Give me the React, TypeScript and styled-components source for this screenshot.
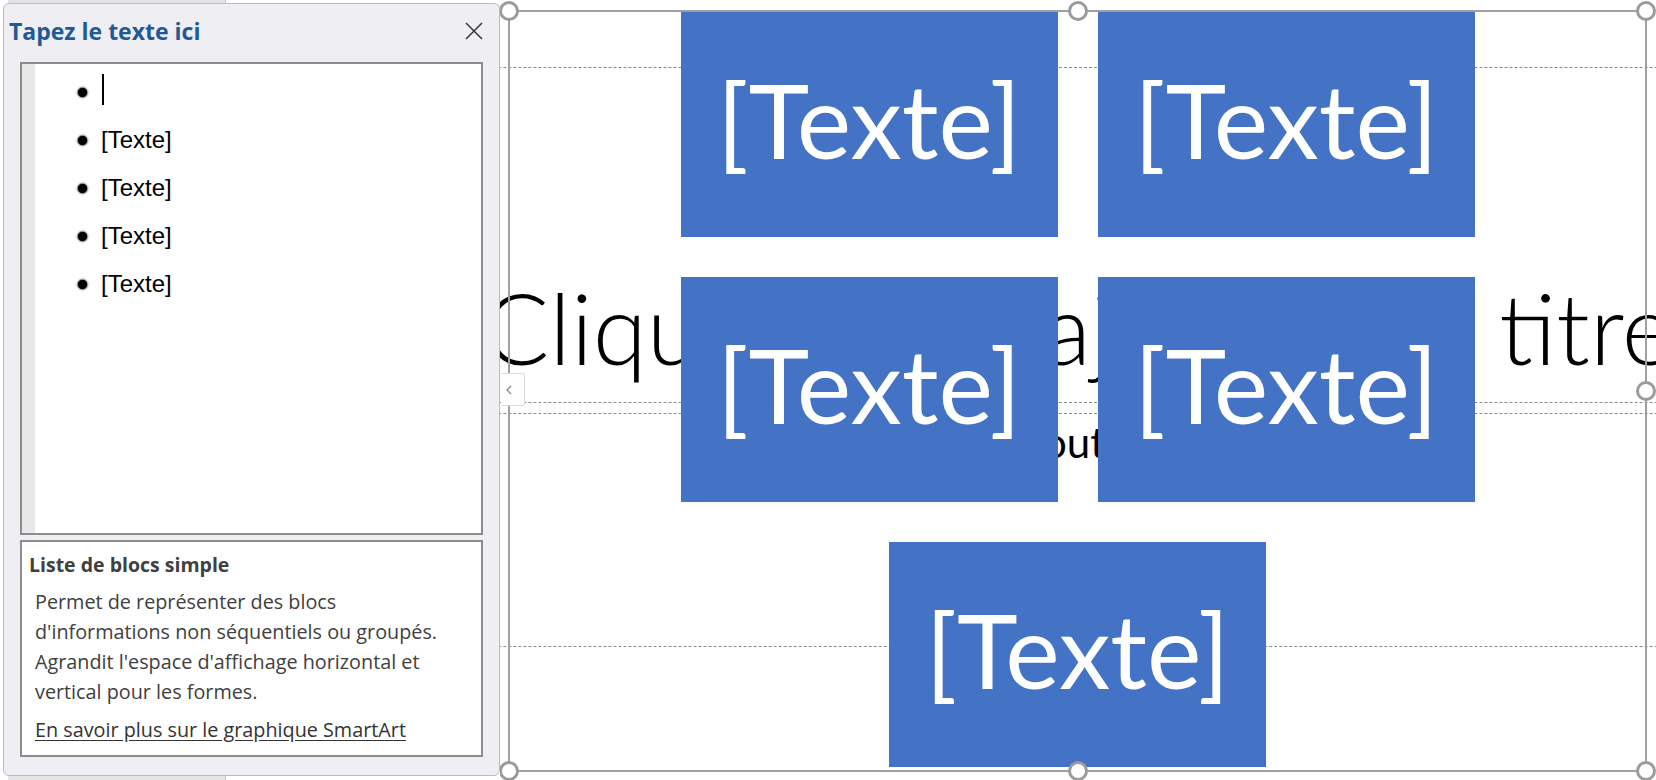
import React from 'react';
import styled, { createGlobalStyle } from 'styled-components';

const GlobalStyle = createGlobalStyle`
  html, body {
    margin: 0;
    padding: 0;
    background: #fff;
  }
  body {
    width: 1656px;
    height: 780px;
    overflow: hidden;
    font-family: 'Open Sans', 'Noto Sans', sans-serif;
  }
`;

const Screen = styled.div`
  position: relative;
  display: flex;
  width: 1656px;
  height: 780px;
`;

// grey ribbon tab peeking out behind the text pane
const BackTab = styled.div`
  position: absolute;
  left: 8px;
  top: 0;
  width: 217px;
  height: 780px;
  background: #e4e4e4;
  border-right: 1px solid #c8c8c8;
`;

const Pane = styled.div`
  position: relative;
  z-index: 2;
  box-sizing: border-box;
  display: flex;
  flex-direction: column;
  width: 497px;
  height: 773px;
  margin: 3px 0 0 3px;
  background: #eeeef3;
  border: 1px solid #b3bec6;
  border-radius: 6px;
`;

const PaneHeader = styled.div`
  box-sizing: border-box;
  display: flex;
  align-items: center;
  justify-content: space-between;
  height: 58px;
  padding: 0 16px 4px 5px;
`;

const PaneTitle = styled.span`
  font-family: 'Open Sans', sans-serif;
  font-weight: 700;
  font-size: 23px;
  color: #1f5a96;
`;

const PaneBody = styled.div`
  flex: 1;
  min-height: 0;
  display: flex;
  flex-direction: column;
  gap: 5px;
  padding: 0 16px 18px 16px;
`;

const ListBox = styled.div`
  flex: 1;
  display: flex;
  background: #fff;
  border: 2px solid #8c8c8c;
`;

const Gutter = styled.div`
  width: 13px;
  background: #e8e8e8;
`;

const BulletList = styled.ul`
  flex: 1;
  list-style: none;
  margin: 0;
  padding: 4px 0 0 43px;
`;

const BulletItem = styled.li`
  display: flex;
  align-items: center;
  height: 48px;
`;

const Bullet = styled.span`
  width: 9px;
  height: 9px;
  margin-right: 14px;
  border-radius: 50%;
  background: #000;
  box-shadow: 0 0 2px 0.5px #000;
`;

const ItemText = styled.span`
  font-family: 'Liberation Sans', Arial, sans-serif;
  font-size: 24px;
  color: #000;
`;

const Caret = styled.span`
  width: 2px;
  height: 31px;
  margin: -5px 0 0 1px;
  background: #000;
`;

const DescBox = styled.div`
  box-sizing: border-box;
  height: 217px;
  padding: 8px 10px 10px 7px;
  background: #fff;
  border: 2px solid #8c8c8c;
  color: #404040;
  white-space: nowrap;
`;

const DescTitle = styled.div`
  font-weight: 700;
  font-size: 19.5px;
  line-height: 30px;
`;

const DescText = styled.div`
  margin: 7px 0 0 6px;
  font-size: 19.8px;
  line-height: 30px;
`;

const DescLink = styled.a`
  display: block;
  margin: 8px 0 0 6px;
  font-size: 19.8px;
  line-height: 30px;
  color: #333;
  text-decoration: underline;
  text-underline-offset: 3px;
`;

const CollapseTab = styled.div`
  position: absolute;
  left: calc(100% + 2px);
  top: 369px;
  box-sizing: border-box;
  display: flex;
  align-items: center;
  width: 24px;
  height: 33px;
  padding-left: 5px;
  background: #fff;
  border: 1px solid #dadada;
  border-left: none;
  border-radius: 0 3px 3px 0;
`;

const Canvas = styled.div`
  position: relative;
  z-index: 1;
  flex: 1;
  height: 780px;
  overflow: hidden;
  background: #fff;
`;

const Placeholder = styled.div<{ $top: number; $height: number; $anchor: 'top' | 'bottom' }>`
  position: absolute;
  left: -307px;
  top: ${(p) => p.$top}px;
  box-sizing: border-box;
  width: 1770px;
  height: ${(p) => p.$height}px;
  display: flex;
  justify-content: center;
  align-items: ${(p) => (p.$anchor === 'top' ? 'flex-start' : 'flex-end')};
  padding: ${(p) => (p.$anchor === 'top' ? '3px 0 0' : '0 0 15px')};
  border: 1px dashed #8a8a8a;
`;

const TitleText = styled.span`
  font-family: Lato, sans-serif;
  font-weight: 300;
  font-size: 98px;
  line-height: 1.2;
  white-space: nowrap;
  color: #000;
`;

const SubtitleText = styled.span`
  font-family: Lato, sans-serif;
  font-size: 42px;
  line-height: 1.2;
  white-space: nowrap;
  color: #000;
`;

const SmartArtFrame = styled.div`
  position: absolute;
  left: 8px;
  top: 10px;
  box-sizing: border-box;
  width: 1139px;
  height: 762px;
  display: flex;
  flex-wrap: wrap;
  justify-content: center;
  align-content: flex-start;
  gap: 40px;
  border: 2px solid #a0a0a0;
`;

const Block = styled.div`
  box-sizing: border-box;
  display: flex;
  align-items: center;
  justify-content: center;
  width: 377px;
  height: 225px;
  padding-bottom: 10px;
  background: #4472c4;
  color: #fff;
  font-family: Lato, sans-serif;
  font-size: 103px;
  line-height: 1.2;
`;

const Handle = styled.span<{ $x: number; $y: number }>`
  position: absolute;
  left: calc(${(p) => p.$x}% + ${(p) => (p.$x === 0 ? -1 : p.$x === 100 ? 1 : 0)}px - 10px);
  top: calc(${(p) => p.$y}% + ${(p) => (p.$y === 0 ? -1 : p.$y === 100 ? 1 : 0)}px - 10px);
  box-sizing: border-box;
  width: 20px;
  height: 20px;
  border: 3px solid #9b9b9b;
  border-radius: 50%;
  background: #fff;
`;

// mid-left handle sits under the pane's collapse tab, so it is left out
const handles = [
  [0, 0], [50, 0], [100, 0],
  [100, 50],
  [0, 100], [50, 100], [100, 100],
];

const CloseIcon = () => (
  <svg width="18" height="18" viewBox="0 0 18 18">
    <path d="M1 1 L17 17 M17 1 L1 17" stroke="#3a3a3a" strokeWidth="1.6" fill="none" />
  </svg>
);

const ChevronLeft = () => (
  <svg width="6" height="10" viewBox="0 0 6 10">
    <polyline points="5,1 1,5 5,9" stroke="#8a8a8a" strokeWidth="1.3" fill="none" />
  </svg>
);

export default function App() {
  return (
    <Screen>
      <GlobalStyle />
      <BackTab />
      <Pane>
        <PaneHeader>
          <PaneTitle>Tapez le texte ici</PaneTitle>
          <CloseIcon />
        </PaneHeader>
        <PaneBody>
          <ListBox>
            <Gutter />
            <BulletList>
              <BulletItem>
                <Bullet />
                <Caret />
              </BulletItem>
              {[1, 2, 3, 4].map((i) => (
                <BulletItem key={i}>
                  <Bullet />
                  <ItemText>[Texte]</ItemText>
                </BulletItem>
              ))}
            </BulletList>
          </ListBox>
          <DescBox>
            <DescTitle>Liste de blocs simple</DescTitle>
            <DescText>
              Permet de représenter des blocs
              <br />
              d'informations non séquentiels ou groupés.
              <br />
              Agrandit l'espace d'affichage horizontal et
              <br />
              vertical pour les formes.
            </DescText>
            <DescLink>En savoir plus sur le graphique SmartArt</DescLink>
          </DescBox>
        </PaneBody>
        <CollapseTab>
          <ChevronLeft />
        </CollapseTab>
      </Pane>
      <Canvas>
        <Placeholder $top={67} $height={336} $anchor="bottom">
          <TitleText>Cliquez pour ajouter un titre</TitleText>
        </Placeholder>
        <Placeholder $top={413} $height={234} $anchor="top">
          <SubtitleText>Cliquez pour ajouter un sous-titre</SubtitleText>
        </Placeholder>
        <SmartArtFrame>
          {[1, 2, 3, 4, 5].map((i) => (
            <Block key={i}>[Texte]</Block>
          ))}
          {handles.map(([x, y]) => (
            <Handle key={`${x}-${y}`} $x={x} $y={y} />
          ))}
        </SmartArtFrame>
      </Canvas>
    </Screen>
  );
}
